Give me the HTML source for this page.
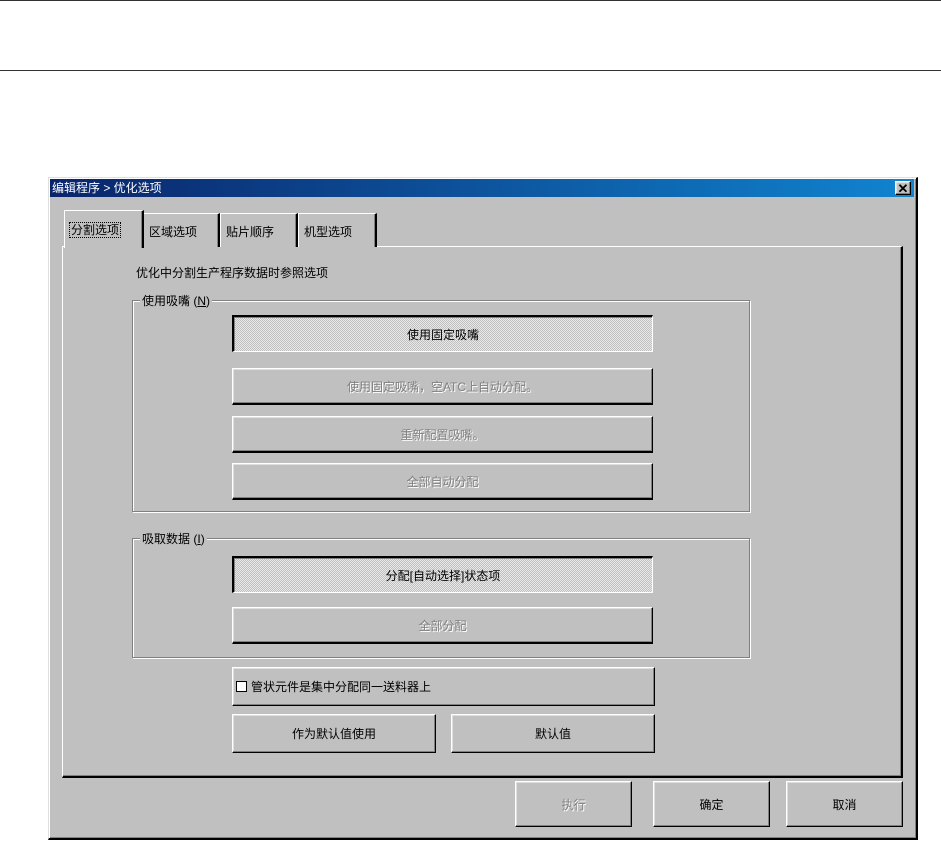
<!DOCTYPE html>
<html><head><meta charset="utf-8"><style>
*{box-sizing:border-box;margin:0;padding:0}
body{width:941px;height:841px;background:#fff;position:relative;overflow:hidden;font-family:"Liberation Sans","Noto Sans CJK SC","WenQuanYi Zen Hei",sans-serif;font-size:12px;color:#000}
.a{position:absolute}
.hl{position:absolute;left:0;width:941px;height:1px;background:#333}
.win{left:48px;top:177px;width:870px;height:663px;background:#c0c0c0;border-top:1px solid #dfdfdf;border-left:1px solid #dfdfdf;border-right:2px solid #000;border-bottom:2px solid #000;box-shadow:inset 1px 1px 0 #fff,inset -1px -1px 0 #808080}
.title{left:50px;top:179px;width:864px;height:18px;background:linear-gradient(90deg,#0a246a,#1084d0);color:#fff;font-size:12px;line-height:18px;padding-left:2px}
.btn{position:absolute;background:#c0c0c0;border-top:1px solid #fff;border-left:1px solid #fff;border-right:1px solid #000;border-bottom:1px solid #000;box-shadow:inset -1px -1px 0 #808080,inset 1px 1px 0 #dfdfdf;text-align:center;display:flex;align-items:center;justify-content:center}
.dis{color:#808080;text-shadow:1px 1px 0 #fff}
.dbtn{border-bottom:2px solid #000}
.prs{background:repeating-conic-gradient(#c0c0c0 0 25%,#e8e8e8 0 50%) 0 0/2px 2px;border-top:2px solid #000;border-left:2px solid #000;border-right:1px solid #fff;border-bottom:1px solid #fff;box-shadow:inset 1px 1px 0 #808080}
.grp{position:absolute;border:1px solid #808080;box-shadow:1px 1px 0 #fff,inset 1px 1px 0 #fff}
.gl{position:absolute;background:#c0c0c0;padding:0 2px}
.tab{position:absolute;top:213px;height:34px;background:#c0c0c0;border-top:1px solid #fff;border-left:1px solid #fff;border-right:2px solid #000;box-shadow:inset -1px 0 0 #808080;padding:9px 0 0 5px}
</style></head><body>
<div class="hl" style="top:0"></div>
<div class="hl" style="top:70px"></div>
<div class="a win"></div>
<div class="a title">编辑程序 &gt; 优化选项</div>
<div class="btn" style="left:895px;top:181px;width:16px;height:14px;font-size:13px;font-weight:bold;line-height:1">✕</div>
<div class="a" style="left:62px;top:246px;width:841px;height:532px;border-top:1px solid #fff;border-left:1px solid #fff;border-right:2px solid #000;border-bottom:2px solid #000;box-shadow:inset -1px -1px 0 #808080"></div>
<div class="tab" style="left:143px;width:77px">区域选项</div>
<div class="tab" style="left:220px;width:78px">贴片顺序</div>
<div class="tab" style="left:298px;width:79px">机型选项</div>
<div class="tab" style="left:64px;top:210px;width:80px;height:38px;padding-top:10px"><span style="outline:1px dotted #000;padding:0 1px">分割选项</span></div>
<div class="a" style="left:136px;top:264px">优化中分割生产程序数据时参照选项</div>
<div class="grp" style="left:132px;top:300px;width:618px;height:212px"></div>
<div class="gl" style="left:140px;top:292px">使用吸嘴 (<u>N</u>)</div>
<div class="btn prs" style="left:232px;top:315px;width:421px;height:37px">使用固定吸嘴</div>
<div class="btn dis dbtn" style="left:232px;top:368px;width:421px;height:37px">使用固定吸嘴，空ATC上自动分配。</div>
<div class="btn dis dbtn" style="left:232px;top:416px;width:421px;height:37px">重新配置吸嘴。</div>
<div class="btn dis dbtn" style="left:232px;top:463px;width:421px;height:37px">全部自动分配</div>
<div class="grp" style="left:132px;top:538px;width:618px;height:120px"></div>
<div class="gl" style="left:140px;top:530px">吸取数据 (<u>I</u>)</div>
<div class="btn prs" style="left:232px;top:556px;width:421px;height:37px">分配[自动选择]状态项</div>
<div class="btn dis dbtn" style="left:232px;top:607px;width:421px;height:37px">全部分配</div>
<div class="btn" style="left:232px;top:667px;width:423px;height:39px;justify-content:flex-start;padding-left:3px"><span style="display:inline-block;width:11px;height:11px;background:#fff;border:1px solid #000;margin-right:4px"></span>管状元件是集中分配同一送料器上</div>
<div class="btn" style="left:232px;top:714px;width:204px;height:39px">作为默认值使用</div>
<div class="btn" style="left:451px;top:714px;width:204px;height:39px">默认值</div>
<div class="btn dis" style="left:515px;top:781px;width:117px;height:46px">执行</div>
<div class="btn" style="left:653px;top:781px;width:117px;height:46px">确定</div>
<div class="btn" style="left:786px;top:781px;width:117px;height:46px">取消</div>
</body></html>
